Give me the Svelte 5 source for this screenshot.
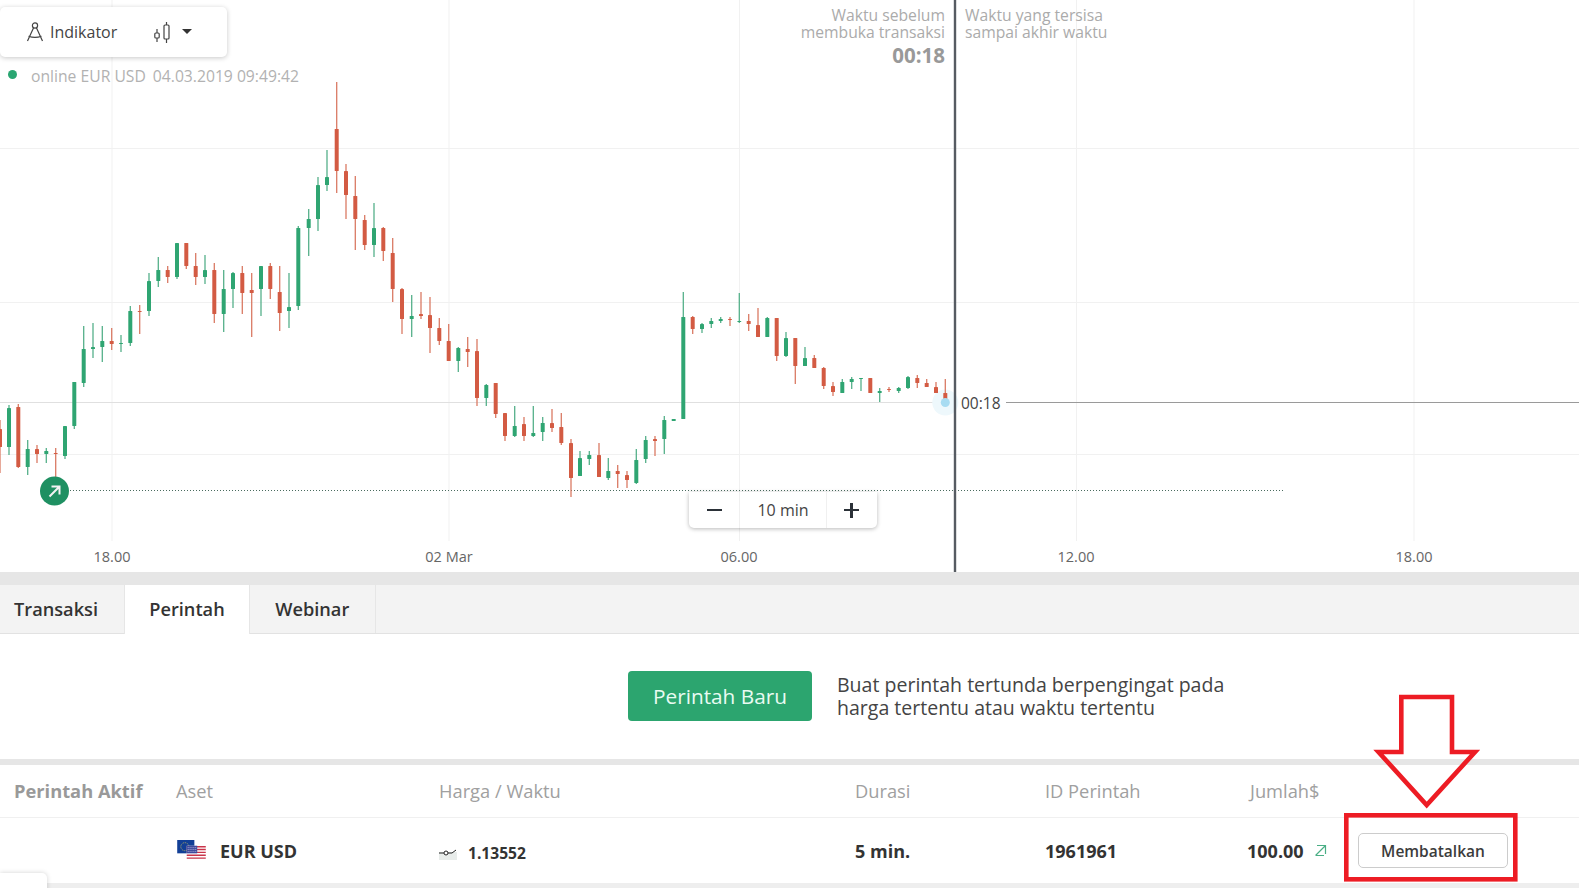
<script>
  const G = 'g', R = 'r';
  // x, wick top, body top, body bottom, wick bottom, colour
  const candles = [
    [0,420,429,447,473,R],[9,405,408,447,455,G],[18.3,404,407,467,468,R],[27.7,440,449,467,475,G],
    [37,445,449,454,463,R],[46.3,448,451,454,463,G],[55.7,448,453,454,477,R],[65,426,426,456,459,G],
    [74.3,382,382,426,429,G],[83.7,326,349,383,387,G],[93,323,347,349,358,G],[102.3,326,341,347,362,G],
    [111.7,328,341,344,350,R],[121,335,343,344,352,G],[130.3,306,311,343,346,G],[139.7,305,311,312,334,R],
    [149,273,281,311,316,G],[158.3,257,270,281,287,G],[167.7,266,270,277,283,R],[177,243,243,277,279,G],
    [186.3,243,243,266,269,R],[195.7,253,266,277,285,R],[205,255,270,277,284,G],[214.3,263,270,314,323,R],
    [223.7,270,289,314,332,G],[233,272,273,289,308,G],[242.3,266,273,293,314,R],[251.7,273,290,293,337,R],
    [261,266,266,289,316,G],[270.3,263,266,289,299,R],[279.7,266,292,313,331,R],[289,273,307,311,328,G],
    [298.3,226,228,306,310,G],[308.7,209,219,228,256,G],[318,177,185,219,231,G],[327,150,177,185,191,G],
    [336.7,82,129,171,193,R],[346,164,171,195,219,R],[355.3,176,196,219,250,R],[364.7,215,220,245,250,R],
    [374,203,228,245,257,G],[383.3,227,228,251,261,R],[392.7,238,253,289,302,R],[402,288,289,319,334,R],
    [411.7,295,316,319,337,G],[421,292,314,316,319,R],[430,297,315,328,353,R],[439.3,318,328,341,345,R],
    [448.7,324,341,361,361,R],[458.3,347,348,361,372,G],[467.7,337,349,352,367,R],[477,339,351,398,406,R],
    [486.3,384,385,398,406,G],[495.7,383,383,414,418,R],[505,413,413,436,441,R],[514.7,406,426,436,437,G],
    [524,417,424,436,441,R],[533.3,406,433,436,437,G],[542.7,417,423,432,441,G],[552,409,423,428,432,R],
    [561.3,413,427,443,445,R],[571,439,443,478,497,R],[580,451,458,476,476,G],[589.3,451,455,459,465,G],
    [599,443,455,477,477,R],[608.3,458,471,478,480,G],[617.7,465,471,474,488,R],[627,471,475,480,488,R],
    [636.3,449,460,483,484,G],[645.7,436,440,459,463,G],[655,436,439,441,456,R],[664.3,416,420,439,454,G],
    [673.7,419,419,421,421,G],[683.3,292,317,419,419,G],[692.7,316,317,329,334,R],[702,323,324,329,333,G],
    [711.3,318,321,324,328,G],[720.7,317,319,321,323,G],[730,317,319,320,326,R],[739.3,293,321,322,323,G],
    [748.7,314,321,324,331,R],[758,308,325,337,337,R],[767.3,317,318,337,337,G],[776.7,318,318,356,361,R],
    [786,332,338,356,357,G],[795.3,338,338,366,384,R],[805,347,358,366,366,G],[814.3,355,358,368,368,R],
    [823.7,367,368,386,389,R],[833,382,386,392,396,R],[842.3,379,382,393,393,G],[851.7,377,379,382,389,G],
    [861,378,378,379,391,G],[870.3,378,378,393,393,R],[879.7,388,391,393,402,G],[889,387,389,390,392,R],
    [898.7,387,388,391,393,G],[908,376,377,388,389,G],[917.3,375,378,383,388,R],[926.7,379,383,387,387,R],
    [936,382,387,393,393,R],[945.3,379,393,399,402,R]
  ];
  const verticals = [112, 449, 739.5, 1076.5, 1414];
  const horizontals = [148.5, 302.5, 454.5];
  const axis = [['18.00', 112], ['02 Mar', 449], ['06.00', 739], ['12.00', 1076], ['18.00', 1414]];
  const tabs = ['Transaksi', 'Perintah', 'Webinar'];
  const heads = ['Aset', 'Harga / Waktu', 'Durasi', 'ID Perintah', 'Jumlah$'];
</script>

<div class="page">
  <section class="chart">
    <svg class="plot" width="1579" height="572" viewBox="0 0 1579 572" aria-hidden="true">
      {#each verticals as x}
        <line x1={x} x2={x} y1="0" y2="541" class="grid" />
      {/each}
      {#each horizontals as y}
        <line x1="0" x2="1579" y1={y} y2={y} class="grid" />
      {/each}
      <line x1="0" x2="955" y1="402.5" y2="402.5" class="price-left" />
      <line x1="1006" x2="1579" y1="402.5" y2="402.5" class="price-right" />
      <line x1="70" x2="1283" y1="490.5" y2="490.5" class="dotted" />

      <circle cx="945.3" cy="402.5" r="13" class="halo" />
      {#each candles as [x, wt, bt, bb, wb, c]}
        <line x1={x} x2={x} y1={wt} y2={wb} class={c === 'g' ? 'wick up' : 'wick down'} />
        <rect x={x - 2} y={bt} width="4" height={Math.max(bb - bt, 1)} rx="0.6" class={c === 'g' ? 'up-fill' : 'down-fill'} />
      {/each}

      <circle cx="945.3" cy="402.5" r="4.5" class="dot" />
      <line x1="955" x2="955" y1="0" y2="572" class="now" />

      <circle cx="54.5" cy="491" r="14.5" class="entry" />
      <path d="M49.5 496.5 L59 487 M51.5 486.5 H59.5 V494.5" class="entry-arrow" />
    </svg>

    <div class="toolbar">
      <button class="tool">
        <svg width="20" height="22" viewBox="0 0 20 22" aria-hidden="true">
          <circle cx="10" cy="4.5" r="2.6" class="ink" />
          <path d="M8.6 6.8 L2.5 20 M11.4 6.8 L17.5 20 M3.5 15.2 Q10 17.5 16.5 15.2" class="ink" />
        </svg>
        Indikator
      </button>
      <button class="tool candle-tool" aria-label="Jenis grafik">
        <svg width="20" height="23" viewBox="0 0 20 23" aria-hidden="true">
          <path d="M3 8 V21 M12.5 1 V22" class="ink" />
          <rect x="0.8" y="12" width="4.4" height="5" rx="1" class="ink fill-w" />
          <rect x="10" y="4" width="5" height="14" rx="1" class="ink fill-w" />
        </svg>
        <span class="caret"></span>
      </button>
    </div>

    <div class="status">
      <span class="live"></span>
      <span class="status-a">online EUR USD</span>
      <span class="status-b">04.03.2019 09:49:42</span>
    </div>

    <div class="timer before">Waktu sebelum<br />membuka transaksi<strong>00:18</strong></div>
    <div class="timer after">Waktu yang tersisa<br />sampai akhir waktu</div>
    <div class="price-time">00:18</div>

    <div class="zoomer">
      <button class="z-btn minus" aria-label="Perkecil"><span class="bar"></span></button>
      <span class="z-val">10 min</span>
      <button class="z-btn plus" aria-label="Perbesar"><span class="bar"></span><span class="bar vert"></span></button>
    </div>

    {#each axis as [label, x]}
      <span class="tick" style="left:{x}px">{label}</span>
    {/each}
  </section>

  <div class="band top-band"></div>

  <nav class="tabs">
    {#each tabs as t, i}
      <button class={i === 1 ? 'tab active' : 'tab'}>{t}</button>
    {/each}
  </nav>

  <section class="new-order">
    <button class="primary">Perintah Baru</button>
    <p>Buat perintah tertunda berpengingat pada<br />harga tertentu atau waktu tertentu</p>
  </section>

  <div class="band mid-band"></div>

  <section class="table">
    <div class="row head">
      <strong class="title">Perintah Aktif</strong>
      {#each heads as h}
        <span>{h}</span>
      {/each}
    </div>
    <div class="row body">
      <span></span>
      <span class="asset">
        <svg width="29" height="20" viewBox="0 0 30 21" aria-hidden="true">
          <rect x="0" y="0" width="18" height="14" fill="#123f96" />
          <circle cx="8" cy="7" r="4.2" fill="none" stroke="#c9b95a" stroke-width="1" stroke-dasharray="1 1.2" />
          <rect x="10" y="6" width="20" height="15" fill="#fff" />
          <path d="M10 7h20M10 10h20M10 13h20M10 16h20M10 19h20" stroke="#c9344a" stroke-width="1.5" />
          <rect x="10" y="6" width="11" height="8" fill="#3f4a9c" />
          <path d="M11 8h9M11 10h9M11 12h9" stroke="#c9cdea" stroke-width="0.8" stroke-dasharray="1 1" />
        </svg>
        EUR USD
      </span>
      <span class="rate">
        <svg width="18" height="14" viewBox="0 0 18 14" aria-hidden="true">
          <rect x="0" y="6" width="18" height="8" fill="#e8ecea" />
          <path d="M0 7 H5 M9 7 H13 L17 4" stroke="#222" stroke-width="1" fill="none" />
          <circle cx="7" cy="7" r="2" fill="#fff" stroke="#222" stroke-width="1" />
        </svg>
        1.13552
      </span>
      <span>5 min.</span>
      <span>1961961</span>
      <span class="amount">
        100.00
        <svg class="up-arrow" width="13" height="13" viewBox="0 0 13 13" aria-hidden="true">
          <path d="M1.5 11.5 L11 2 M3 1.5 H11.5 V10 M2 11.5 H10" />
        </svg>
      </span>
      <button class="cancel">Membatalkan</button>
    </div>
  </section>

  <div class="foot"></div>
  <div class="corner"></div>

  <svg class="callout" width="180" height="200" viewBox="0 0 180 200" aria-hidden="true">
    <path d="M58.3 4 H109 V59 H132 L83.7 112 L35.5 59 H58.3 Z" class="call-line" />
    <rect x="3.3" y="122.3" width="169" height="64" class="call-line" />
  </svg>
</div>

<style>
  :global(body) {
    margin: 0;
    background: #fff;
    overflow: hidden;
  }
  .page {
    position: relative;
    width: 1579px;
    height: 888px;
    overflow: hidden;
    font-family: "Open Sans", "Noto Sans", sans-serif;
    color: #333;
  }
  button {
    font-family: inherit;
    cursor: pointer;
  }

  /* chart */
  .chart {
    position: relative;
    height: 572px;
  }
  .plot {
    display: block;
  }
  .grid { stroke: #f1f1f1; stroke-width: 1; }
  .price-left { stroke: #e0e0e0; stroke-width: 1; }
  .price-right { stroke: #9a9a9a; stroke-width: 1; }
  .dotted { stroke: #4a6b5f; stroke-width: 1; stroke-dasharray: 1 2; }
  .wick { stroke-width: 1.3; }
  .up { stroke: #55b08a; }
  .down { stroke: #da7a64; }
  .up-fill { fill: #2fa572; }
  .down-fill { fill: #d35b43; }
  .halo { fill: #eef8fc; }
  .dot { fill: #a8dcf2; }
  .now { stroke: #565b62; stroke-width: 2.4; }
  .entry { fill: #1f9062; }
  .entry-arrow { fill: none; stroke: #f3f3f3; stroke-width: 2; }

  .toolbar {
    position: absolute;
    left: 0;
    top: 7px;
    width: 227px;
    height: 50px;
    display: flex;
    align-items: center;
    background: #fff;
    border-radius: 5px;
    box-shadow: 0 1px 5px rgba(0, 0, 0, 0.22);
  }
  .tool {
    display: flex;
    align-items: center;
    gap: 5px;
    border: 0;
    padding: 0;
    background: none;
    font-size: 16px;
    color: #444;
  }
  .tool:first-child { margin-left: 25px; }
  .candle-tool { margin-left: 37px; gap: 8px; }
  .ink { fill: none; stroke: #444; stroke-width: 1.2; }
  .fill-w { fill: #fff; }
  .caret {
    width: 0;
    height: 0;
    border: 5px solid transparent;
    border-top-color: #333;
    border-bottom-width: 0;
    margin-top: -2px;
  }

  .status {
    position: absolute;
    left: 8px;
    top: 66px;
    display: flex;
    align-items: center;
    font-size: 15.7px;
    line-height: 20px;
    color: #b2b2b2;
  }
  .live {
    width: 9px;
    height: 9px;
    margin: -4px 14px 0 0;
    border-radius: 50%;
    background: #2aa672;
  }
  .status-b { margin-left: 7px; }

  .timer {
    position: absolute;
    top: 7px;
    font-size: 15.7px;
    line-height: 16.5px;
    color: #ababab;
  }
  .before {
    right: 634px;
    text-align: right;
  }
  .before strong {
    display: block;
    margin-top: 3px;
    font-size: 20.5px;
    line-height: 24px;
    color: #999;
  }
  .after { left: 965px; }

  .price-time {
    position: absolute;
    left: 961px;
    top: 393px;
    font-size: 15.5px;
    line-height: 20px;
    color: #444;
  }

  .zoomer {
    position: absolute;
    left: 689px;
    top: 492px;
    width: 188px;
    height: 36px;
    display: grid;
    grid-template-columns: 50px 88px 50px;
    align-items: center;
    background: #fff;
    border-radius: 0 0 5px 5px;
    box-shadow: 0 1px 4px rgba(0, 0, 0, 0.28);
  }
  .z-btn {
    position: relative;
    height: 36px;
    border: 0;
    padding: 0;
    background: none;
  }
  .bar {
    position: absolute;
    left: 18px;
    top: 16.5px;
    width: 15px;
    height: 2.6px;
    background: #2b3138;
  }
  .plus .bar { left: 17px; }
  .plus .vert {
    left: 23.2px;
    top: 10.5px;
    width: 2.6px;
    height: 15px;
  }
  .z-val {
    height: 36px;
    line-height: 36px;
    text-align: center;
    font-size: 16px;
    color: #444;
    border-left: 1px solid #f0f0f0;
    border-right: 1px solid #f0f0f0;
  }

  .tick {
    position: absolute;
    top: 547px;
    transform: translateX(-50%);
    font-size: 14.5px;
    line-height: 20px;
    color: #666;
  }

  /* bands */
  .band { background: #e6e6e6; }
  .top-band { height: 13px; }
  .mid-band { height: 6px; }

  /* tabs */
  .tabs {
    display: flex;
    height: 48px;
    background: #f3f3f3;
    border-bottom: 1px solid #e2e2e2;
    box-sizing: content-box;
  }
  .tab {
    width: 125.5px;
    padding: 0;
    border: 0;
    border-right: 1px solid #e6e6e6;
    background: none;
    font-size: 18.2px;
    font-weight: 600;
    color: #333;
  }
  .tab:first-child { width: 124px; border-right: 0; text-align: left; padding-left: 14px; }
  .tab.active {
    width: 126px;
    height: 49px;
    padding-bottom: 1px;
    background: #fff;
    border-left: 1px solid #e6e6e6;
    position: relative;
  }

  /* new order */
  .new-order {
    height: 125px;
    display: flex;
    align-items: center;
    padding: 0 0 1px 628px;
    box-sizing: border-box;
  }
  .primary {
    width: 184px;
    height: 50px;
    border: 0;
    border-radius: 4px;
    background: #2ca56f;
    color: #e9fbf2;
    font-size: 20.8px;
  }
  .new-order p {
    margin: 0 0 0 25px;
    font-size: 19.55px;
    line-height: 23px;
    color: #444;
  }

  /* table */
  .row {
    display: grid;
    grid-template-columns: 162px 263px 416px 190px 205px 107px 170px;
    align-items: center;
    padding-left: 14px;
  }
  .head {
    height: 53px;
    padding-bottom: 2px;
    box-sizing: border-box;
    border-bottom: 1px solid #f0f0f0;
    font-size: 18.3px;
    color: #a0a0a0;
  }
  .title { color: #999; }
  .body {
    height: 65px;
    box-sizing: border-box;
    font-size: 18px;
    font-weight: 700;
    color: #333;
  }
  .asset, .rate, .amount {
    display: flex;
    align-items: center;
  }
  .asset { gap: 14px; padding-left: 1px; }
  .asset svg { margin-top: -1px; }
  .rate { gap: 11px; font-size: 15.6px; padding-top: 4px; }
  .amount { gap: 10px; margin-left: -3px; white-space: nowrap; }
  .up-arrow path { fill: none; stroke: #4aae85; stroke-width: 1.2; }
  .cancel {
    width: 150px;
    height: 35px;
    margin-left: 1px;
    padding: 0;
    background: #fff;
    border: 1px solid #ccc;
    border-radius: 5px;
    font-size: 15.5px;
    font-weight: 600;
    color: #3c3c3c;
  }

  .foot {
    height: 5px;
    background: #eeeeee;
  }
  .corner {
    position: absolute;
    left: 0;
    bottom: -6px;
    width: 47px;
    height: 21px;
    background: #fff;
    border-radius: 0 5px 0 0;
    box-shadow: 0 0 5px rgba(0, 0, 0, 0.18);
  }

  .callout {
    position: absolute;
    left: 1343px;
    top: 693px;
  }
  .call-line {
    fill: none;
    stroke: #ed1c24;
    stroke-width: 4.6;
  }
</style>
